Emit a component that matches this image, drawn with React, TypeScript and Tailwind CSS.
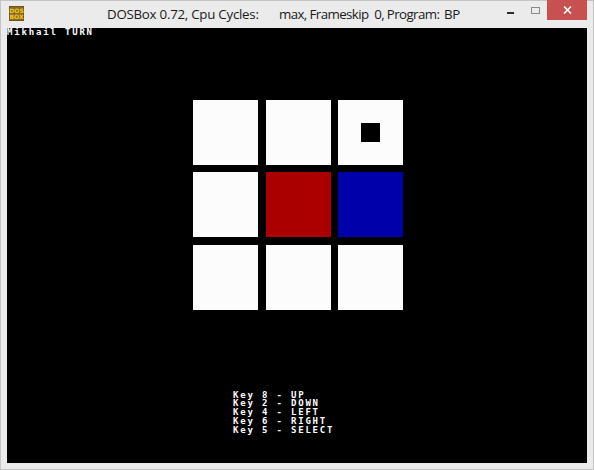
import React from 'react';

const dos = "font-['DejaVu_Sans_Mono',monospace] font-bold text-[9px] tracking-[1.82px] leading-[8.7px] text-white whitespace-pre";

const cells = ['w', 'w', 'dot', 'w', 'r', 'b', 'w', 'w', 'w'];

const keys = [
  'Key 8 - UP',
  'Key 2 - DOWN',
  'Key 4 - LEFT',
  'Key 6 - RIGHT',
  'Key 5 - SELECT',
];

const DosBoxIcon = () => (
  <svg width="15" height="15" viewBox="0 0 15 15">
    <rect x="0" y="0" width="15" height="15" fill="#6a561a" />
    <rect x="1" y="1" width="13" height="13" fill="#8a6d1c" />
    <text x="7.5" y="6.6" fontSize="6" fontWeight="bold" textAnchor="middle" fill="#f4c430" fontFamily="DejaVu Sans">DOS</text>
    <text x="7.5" y="13" fontSize="6" fontWeight="bold" textAnchor="middle" fill="#f4c430" fontFamily="DejaVu Sans">BOX</text>
  </svg>
);

const App = () => {
  return (
    <div className="w-[594px] h-[470px] bg-[#ebebeb] overflow-hidden shadow-[inset_0_0_0_1px_#c4c4c4]">
      {/* Title bar */}
      <div className="h-[28px] flex items-start">
        <div className="ml-[9px] mt-[6px] flex">
          <DosBoxIcon />
        </div>
        <div className="ml-[83px] mt-[5px] flex font-['Open_Sans',sans-serif] text-[13.3px] tracking-[-0.25px] text-[#1a1a1a] whitespace-pre">
          <span className="w-[172px]">DOSBox 0.72, Cpu Cycles:</span>
          <span className="w-[165px] tracking-[-0.6px]">max, Frameskip  0, Program:</span>
          <span>BP</span>
        </div>
        <div className="ml-auto mr-[7px] flex items-start">
          <div className="mt-[12px] w-[7px] h-[2px] bg-[#2a2a2a]" />
          <div className="ml-[17px] mt-[7px] w-[9px] h-[7px] border border-[#8a8a8a]" />
          <div className="ml-[7px] w-[40px] h-[20px] bg-[#c75050] flex items-center justify-center">
            <svg width="9" height="8" viewBox="0 0 9 8">
              <path d="M1 0.5 L8 7.5 M8 0.5 L1 7.5" stroke="white" strokeWidth="1.6" />
            </svg>
          </div>
        </div>
      </div>

      {/* DOS screen */}
      <div className="ml-[7px] w-[580px] h-[435px] bg-black flex flex-col">
        <div className={dos}>Mikhail TURN</div>
        <div className="ml-[186px] mt-[63px] grid grid-cols-[65px_65px_65px] gap-[7.5px]">
          {cells.map((c, i) => (
            <div
              key={i}
              className={
                'w-[65px] h-[65px] flex items-center justify-center ' +
                (c === 'r' ? 'bg-[#aa0000]' : c === 'b' ? 'bg-[#0000aa]' : 'bg-[#fcfcfc]')
              }
            >
              {c === 'dot' && <div className="w-[19px] h-[19px] bg-black" />}
            </div>
          ))}
        </div>
        <div className="ml-[226px] mt-[81px] flex flex-col">
          {keys.map((k) => (
            <div key={k} className={dos}>{k}</div>
          ))}
        </div>
      </div>
    </div>
  );
};

export default App;
